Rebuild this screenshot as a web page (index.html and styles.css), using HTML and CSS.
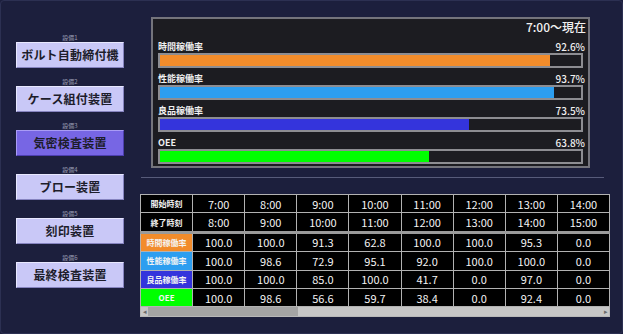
FILE: index.html
```html
<!DOCTYPE html>
<html lang="ja">
<head>
    <meta charset="UTF-8">
    <meta name="viewport" content="width=device-width, initial-scale=1.0">
    <title>稼働状況</title>
    <link rel="stylesheet" href="styles.css">
</head>
<body>
    <div class="screen">
        <div class="sidebar">
            <div class="machine">
                <div class="machine-no">設備1</div>
                <div class="machine-btn">ボルト自動締付機</div>
            </div>
            <div class="machine">
                <div class="machine-no">設備2</div>
                <div class="machine-btn">ケース組付装置</div>
            </div>
            <div class="machine">
                <div class="machine-no">設備3</div>
                <div class="machine-btn active">気密検査装置</div>
            </div>
            <div class="machine">
                <div class="machine-no">設備4</div>
                <div class="machine-btn">ブロー装置</div>
            </div>
            <div class="machine">
                <div class="machine-no">設備5</div>
                <div class="machine-btn">刻印装置</div>
            </div>
            <div class="machine">
                <div class="machine-no">設備6</div>
                <div class="machine-btn">最終検査装置</div>
            </div>
        </div>

        <div class="main">
            <div class="chart-panel">
                <div class="chart-title">7:00～現在</div>
                <div class="rate">
                    <div class="rate-head"><span>時間稼働率</span><span>92.6%</span></div>
                    <div class="bar"><div class="fill orange" style="width: 92.6%"></div></div>
                </div>
                <div class="rate">
                    <div class="rate-head"><span>性能稼働率</span><span>93.7%</span></div>
                    <div class="bar"><div class="fill blue" style="width: 93.7%"></div></div>
                </div>
                <div class="rate">
                    <div class="rate-head"><span>良品稼働率</span><span>73.5%</span></div>
                    <div class="bar"><div class="fill indigo" style="width: 73.5%"></div></div>
                </div>
                <div class="rate">
                    <div class="rate-head"><span>OEE</span><span>63.8%</span></div>
                    <div class="bar"><div class="fill green" style="width: 63.8%"></div></div>
                </div>
            </div>

            <div class="divider"></div>

            <div class="table-box">
                <table class="hourly">
                    <tr>
                        <th>開始時刻</th>
                        <td>7:00</td><td>8:00</td><td>9:00</td><td>10:00</td>
                        <td>11:00</td><td>12:00</td><td>13:00</td><td>14:00</td>
                    </tr>
                    <tr class="time-end">
                        <th>終了時刻</th>
                        <td>8:00</td><td>9:00</td><td>10:00</td><td>11:00</td>
                        <td>12:00</td><td>13:00</td><td>14:00</td><td>15:00</td>
                    </tr>
                    <tr>
                        <th class="orange">時間稼働率</th>
                        <td>100.0</td><td>100.0</td><td>91.3</td><td>62.8</td>
                        <td>100.0</td><td>100.0</td><td>95.3</td><td>0.0</td>
                    </tr>
                    <tr>
                        <th class="blue">性能稼働率</th>
                        <td>100.0</td><td>98.6</td><td>72.9</td><td>95.1</td>
                        <td>92.0</td><td>100.0</td><td>100.0</td><td>0.0</td>
                    </tr>
                    <tr>
                        <th class="indigo">良品稼働率</th>
                        <td>100.0</td><td>100.0</td><td>85.0</td><td>100.0</td>
                        <td>41.7</td><td>0.0</td><td>97.0</td><td>0.0</td>
                    </tr>
                    <tr>
                        <th class="green">OEE</th>
                        <td>100.0</td><td>98.6</td><td>56.6</td><td>59.7</td>
                        <td>38.4</td><td>0.0</td><td>92.4</td><td>0.0</td>
                    </tr>
                </table>
                <div class="scrollbar">
                    <span class="arrow">◂</span>
                    <div class="thumb"></div>
                    <div class="track"></div>
                    <span class="arrow">▸</span>
                </div>
            </div>
        </div>
    </div>
</body>
</html>
```

FILE: styles.css
```css
body {
    margin: 0;
    padding: 0;
    background-color: #1c1f3d;
    font-family: "Noto Sans CJK JP", "Noto Sans", sans-serif;
}
.screen {
    width: 623px;
    height: 334px;
    box-sizing: border-box;
    border: 1px solid #2c3052;
    border-radius: 4px;
    display: flex;
    overflow: hidden;
}
.sidebar {
    width: 139px;
    padding: 33px 0 0 15px;
    box-sizing: border-box;
    display: flex;
    flex-direction: column;
    gap: 10px;
}
.machine {
    width: 108px;
}
.machine-no {
    height: 8px;
    line-height: 8px;
    font-size: 6px;
    color: #9a9bb2;
    text-align: center;
}
.machine-btn {
    height: 26px;
    box-sizing: border-box;
    background-color: #c9c8f7;
    border: 1px solid #e8e8ff;
    border-right-color: #8684c0;
    border-bottom-color: #8684c0;
    color: #1d1d2b;
    font-size: 12px;
    font-weight: 700;
    line-height: 24px;
    text-align: center;
    letter-spacing: 0.2px;
}
.machine-btn.active {
    background-color: #7766e4;
    border-color: #a99cf5 #4d3fb0 #4d3fb0 #a99cf5;
}
.main {
    flex: 1;
}
.chart-panel {
    margin: 16px 0 0 11px;
    width: 439px;
    height: 151px;
    box-sizing: border-box;
    background-color: #1c1c21;
    border: 2px solid #74747c;
    padding: 0 5px 2px 5px;
    display: flex;
    flex-direction: column;
    gap: 4px;
}
.chart-title {
    height: 17px;
    line-height: 16px;
    text-align: right;
    color: #f2f2f2;
    font-size: 12px;
    font-weight: 500;
    margin-right: -3px;
}
.rate-head {
    height: 13px;
    line-height: 13px;
    display: flex;
    justify-content: space-between;
    color: #f0f0f0;
    font-size: 9px;
    font-weight: 700;
    margin-right: -2px;
}
.rate-head span:last-child {
    font-weight: 500;
    font-size: 10px;
}
.bar {
    height: 15px;
    box-sizing: border-box;
    border: 2px solid #8d8d92;
    background-color: #1c1c21;
}
.fill {
    height: 100%;
}
.orange { background-color: #f28c2b; }
.blue { background-color: #2d9ef0; }
.indigo { background-color: #3434dc; }
.green { background-color: #00ff00; }
.divider {
    margin: 9px 0 0 1px;
    width: 463px;
    height: 1px;
    background-color: #575b7a;
}
.table-box {
    margin-top: 16px;
    width: 470px;
}
.hourly {
    width: 100%;
    border-collapse: collapse;
    table-layout: fixed;
    background-color: #000;
    color: #f4f4f4;
}
.hourly th, .hourly td {
    height: 17.4px;
    padding: 0;
    border: 1px solid #b2b2b2;
    text-align: center;
}
.hourly th {
    font-size: 8px;
    font-weight: 700;
}
.hourly td {
    font-size: 11px;
    font-weight: 400;
}
.time-end th, .time-end td {
    border-bottom: 3px solid #9a9a9a;
}
.scrollbar {
    height: 9px;
    display: flex;
    background-color: #c6c6c6;
    border: 1px solid #b8b8b8;
    border-top: none;
}
.arrow {
    width: 7px;
    font-size: 7px;
    line-height: 9px;
    color: #6a6a6a;
    text-align: center;
}
.thumb {
    width: 150px;
    background-color: #a4a4a4;
}
.track {
    flex: 1;
}
```
